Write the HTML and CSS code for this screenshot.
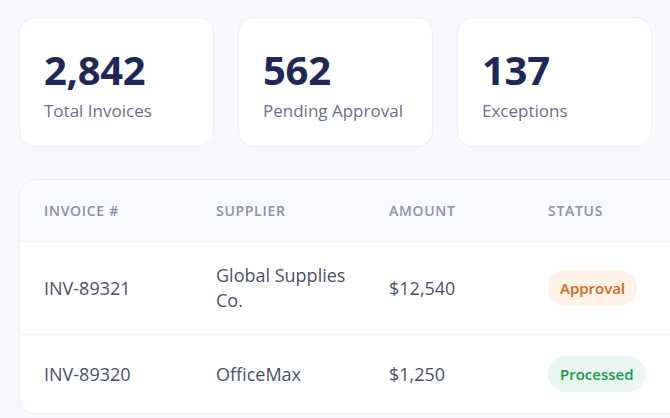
FILE: index.html
```html
<!DOCTYPE html>
<html lang="en">
<head>
<meta charset="utf-8">
<title>Invoices</title>
<link rel="stylesheet" href="styles.css">
</head>
<body>
<main class="page">
  <section class="stats">
    <div class="stat-card">
      <div class="stat-value">2,842</div>
      <div class="stat-label">Total Invoices</div>
    </div>
    <div class="stat-card">
      <div class="stat-value">562</div>
      <div class="stat-label">Pending Approval</div>
    </div>
    <div class="stat-card">
      <div class="stat-value">137</div>
      <div class="stat-label">Exceptions</div>
    </div>
  </section>
  <section class="table-card">
    <div class="row head">
      <div class="cell">Invoice #</div>
      <div class="cell">Supplier</div>
      <div class="cell">Amount</div>
      <div class="cell">Status</div>
    </div>
    <div class="row">
      <div class="cell">INV-89321</div>
      <div class="cell">Global Supplies Co.</div>
      <div class="cell">$12,540</div>
      <div class="cell"><span class="badge badge-approval">Approval</span></div>
    </div>
    <div class="row">
      <div class="cell">INV-89320</div>
      <div class="cell">OfficeMax</div>
      <div class="cell">$1,250</div>
      <div class="cell"><span class="badge badge-processed">Processed</span></div>
    </div>
  </section>
</main>
</body>
</html>
```

FILE: styles.css
```css
html, body {
  margin: 0;
  padding: 0;
  background: #f7f8fc;
  overflow: hidden;
}
body {
  font-family: "Open Sans", "Noto Sans", sans-serif;
  width: 670px;
  height: 418px;
}
.page {
  padding: 17px 18px 0 19px;
}
.stats {
  display: grid;
  grid-template-columns: repeat(3, 1fr);
  gap: 24px;
}
.stat-card {
  background: #ffffff;
  border: 1px solid #eceef4;
  border-radius: 16px;
  padding: 28px 24px 23px;
  height: 130px;
  box-sizing: border-box;
}
.stat-value {
  font-size: 40px;
  line-height: 48px;
  font-weight: 700;
  color: #1f2856;
  letter-spacing: -0.3px;
}
.stat-label {
  margin-top: 5px;
  font-size: 17px;
  line-height: 24px;
  font-weight: 500;
  color: #6b7086;
}
.table-card {
  margin-top: 32px;
  margin-right: -60px;
  background: #ffffff;
  border: 1px solid #eceef4;
  border-radius: 16px;
  overflow: hidden;
}
.row {
  display: grid;
  grid-template-columns: 172px 173px 159px 1fr;
  padding: 0 24px;
  align-items: center;
  border-top: 1px solid #eceef4;
}
.row.head {
  border-top: none;
  background: #f8f9fc;
}
.cell {
  padding: 21px 24px 21px 0;
  font-size: 18px;
  line-height: 25px;
  color: #4b5168;
}
.head .cell {
  font-size: 14px;
  line-height: 19px;
  font-weight: 600;
  text-transform: uppercase;
  letter-spacing: 0.7px;
  color: #8d92a3;
}
.badge {
  display: inline-flex;
  align-items: center;
  height: 36px;
  padding: 0 12px;
  border-radius: 18px;
  font-size: 15px;
  font-weight: 600;
  vertical-align: middle;
}
.badge-approval {
  background: #fef1e5;
  color: #d2681f;
}
.badge-processed {
  background: #e8f7ef;
  color: #1c9658;
}
```
